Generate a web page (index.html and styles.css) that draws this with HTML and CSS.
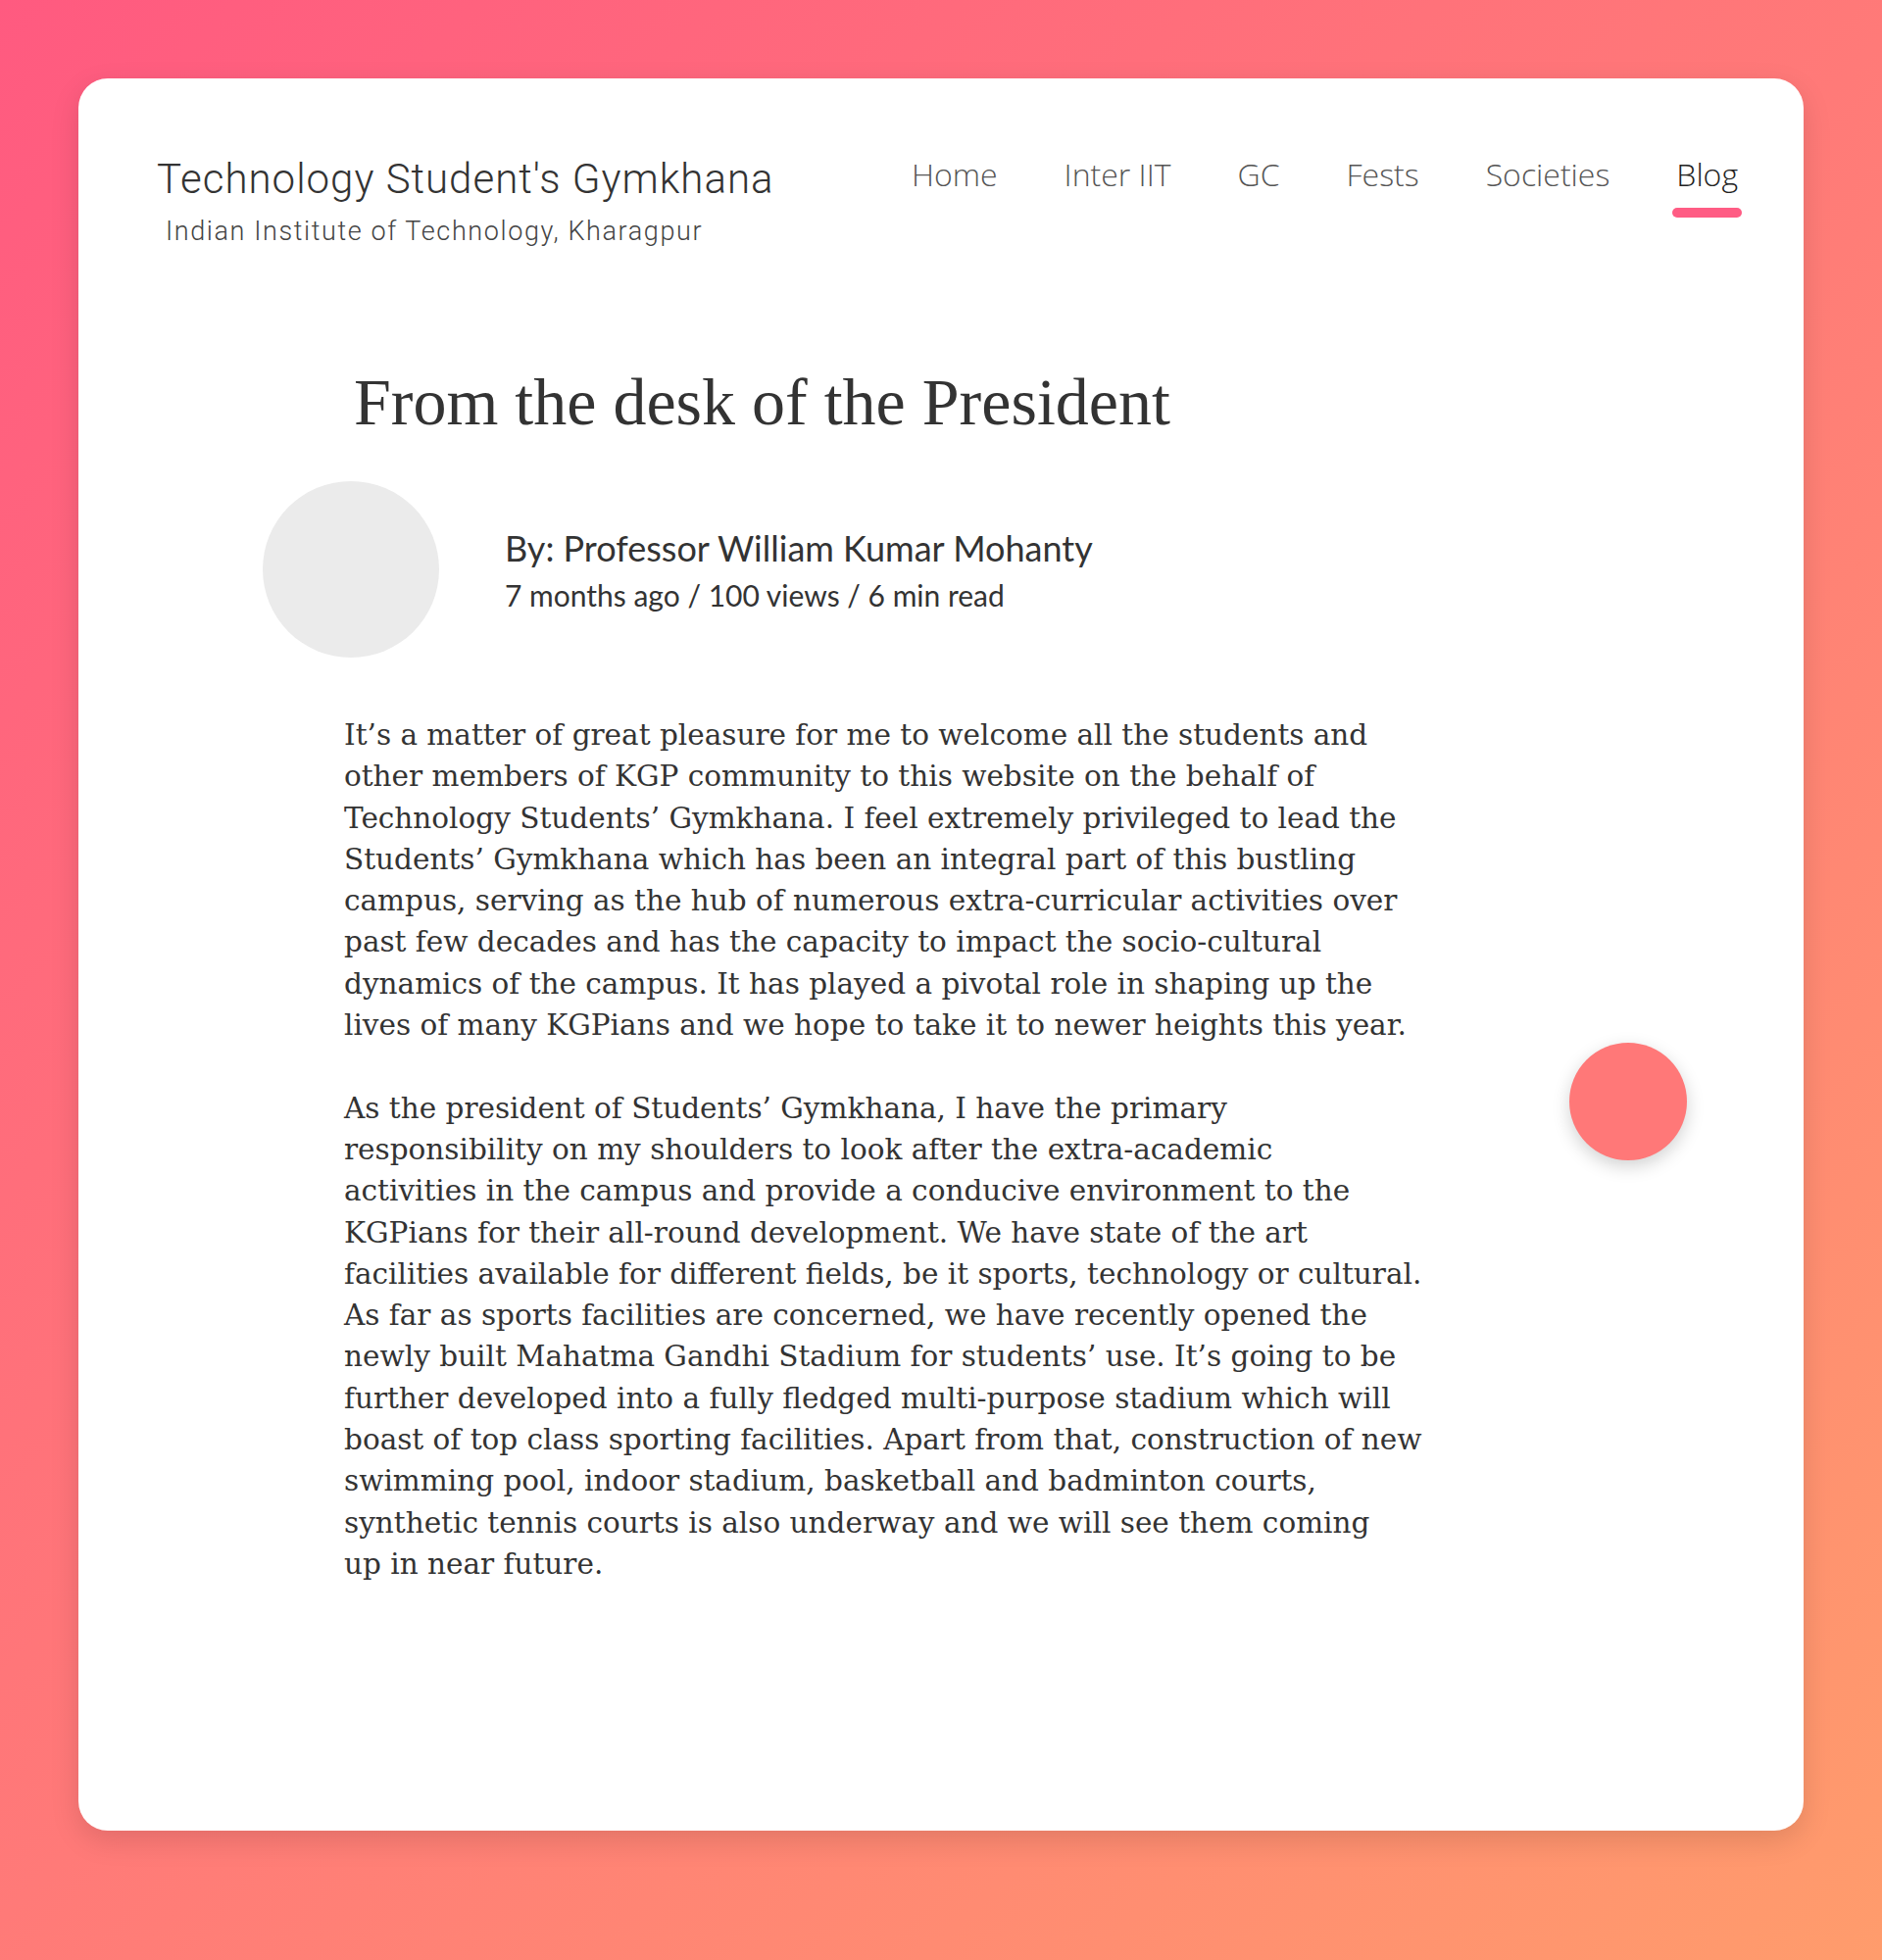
FILE: index.html
```html
<!DOCTYPE html>
<html lang="en">
<head>
<meta charset="utf-8">
<title>From the desk of the President</title>
<link rel="stylesheet" href="styles.css">
</head>
<body>
<div class="page">
  <div class="card">
    <header class="header">
      <div class="brand">
        <div class="brand-title">Technology Student's Gymkhana</div>
        <div class="brand-sub">Indian Institute of Technology, Kharagpur</div>
      </div>
      <nav class="nav">
        <a class="nav-item" href="#">Home</a>
        <a class="nav-item" href="#">Inter IIT</a>
        <a class="nav-item" href="#">GC</a>
        <a class="nav-item" href="#">Fests</a>
        <a class="nav-item" href="#">Societies</a>
        <a class="nav-item active" href="#">Blog</a>
      </nav>
    </header>

    <article class="article">
      <h1 class="article-title">From the desk of the President</h1>
      <div class="byline">
        <div class="avatar"></div>
        <div class="byline-text">
          <div class="author">By: Professor William Kumar Mohanty</div>
          <div class="meta">7 months ago / 100 views / 6 min read</div>
        </div>
      </div>
      <div class="body">
        <p>It’s a matter of great pleasure for me to welcome all the students and<br>
        other members of KGP community to this website on the behalf of<br>
        Technology Students’ Gymkhana. I feel extremely privileged to lead the<br>
        Students’ Gymkhana which has been an integral part of this bustling<br>
        campus, serving as the hub of numerous extra-curricular activities over<br>
        past few decades and has the capacity to impact the socio-cultural<br>
        dynamics of the campus. It has played a pivotal role in shaping up the<br>
        lives of many KGPians and we hope to take it to newer heights this year.</p>
        <p>As the president of Students’ Gymkhana, I have the primary<br>
        responsibility on my shoulders to look after the extra-academic<br>
        activities in the campus and provide a conducive environment to the<br>
        KGPians for their all-round development. We have state of the art<br>
        facilities available for different fields, be it sports, technology or cultural.<br>
        As far as sports facilities are concerned, we have recently opened the<br>
        newly built Mahatma Gandhi Stadium for students’ use. It’s going to be<br>
        further developed into a fully fledged multi-purpose stadium which will<br>
        boast of top class sporting facilities. Apart from that, construction of new<br>
        swimming pool, indoor stadium, basketball and badminton courts,<br>
        synthetic tennis courts is also underway and we will see them coming<br>
        up in near future.</p>
      </div>
    </article>

    <div class="fab"></div>
  </div>
</div>
</body>
</html>
```

FILE: styles.css
```css
html, body {
  margin: 0;
  padding: 0;
}

body {
  width: 1920px;
  min-height: 2000px;
  background: linear-gradient(135deg, #ff5a80 0%, #ff7a78 50%, #ff9c6c 100%);
  font-family: "Roboto", "Liberation Sans", sans-serif;
  color: #333;
}

.page {
  padding: 80px;
}

.card {
  position: relative;
  box-sizing: border-box;
  height: 1788px;
  background: #fff;
  border-radius: 30px;
  box-shadow: 0 10px 30px rgba(0, 0, 0, 0.12);
  padding: 74px 67px 0 80px;
}

.header {
  display: flex;
  justify-content: space-between;
  align-items: flex-start;
}

.brand-title {
  font-family: "Roboto", sans-serif;
  font-weight: 300;
  font-size: 42px;
  letter-spacing: 1px;
  line-height: 58px;
  color: #333;
}

.brand-sub {
  font-family: "Roboto", sans-serif;
  font-weight: 300;
  font-size: 27px;
  letter-spacing: 1.6px;
  line-height: 36px;
  margin-left: 9px;
  margin-top: 6px;
  color: #444;
}

.nav {
  display: flex;
  gap: 68px;
  padding-top: 2px;
}

.nav-item {
  position: relative;
  font-family: "Open Sans", sans-serif;
  font-weight: 300;
  font-size: 32px;
  line-height: 44px;
  color: #555;
  text-decoration: none;
}

.nav-item.active {
  color: #222;
}

.nav-item.active::after {
  content: "";
  position: absolute;
  left: -4px;
  right: -4px;
  top: 56px;
  height: 10px;
  border-radius: 5px;
  background: #ff5c84;
}

.article {
  width: 1200px;
  margin-left: 191px;
  margin-top: 114px;
}

.article-title {
  margin: 0 0 0 10px;
  font-family: "Liberation Serif", serif;
  font-weight: 400;
  font-size: 68px;
  line-height: 84px;
  color: #333;
}

.byline {
  display: flex;
  align-items: center;
  gap: 67px;
  margin-left: -83px;
  margin-top: 39px;
}

.avatar {
  width: 180px;
  height: 180px;
  border-radius: 50%;
  background: #ebebeb;
  flex: none;
}

.author {
  font-family: "Lato", sans-serif;
  font-size: 36px;
  line-height: 48px;
  color: #333;
}

.meta {
  font-family: "Lato", sans-serif;
  font-size: 30px;
  line-height: 40px;
  color: #333;
  margin-top: 4px;
}

.body {
  margin-top: 58px;
  font-family: "DejaVu Serif", serif;
  font-size: 29.5px;
  line-height: 42.3px;
  color: #333;
}

.body p {
  margin: 0 0 42.3px 0;
}

.fab {
  position: absolute;
  left: 1521px;
  top: 984px;
  width: 120px;
  height: 120px;
  border-radius: 50%;
  background: #ff7878;
  box-shadow: 0 6px 18px rgba(0, 0, 0, 0.18);
}
```
